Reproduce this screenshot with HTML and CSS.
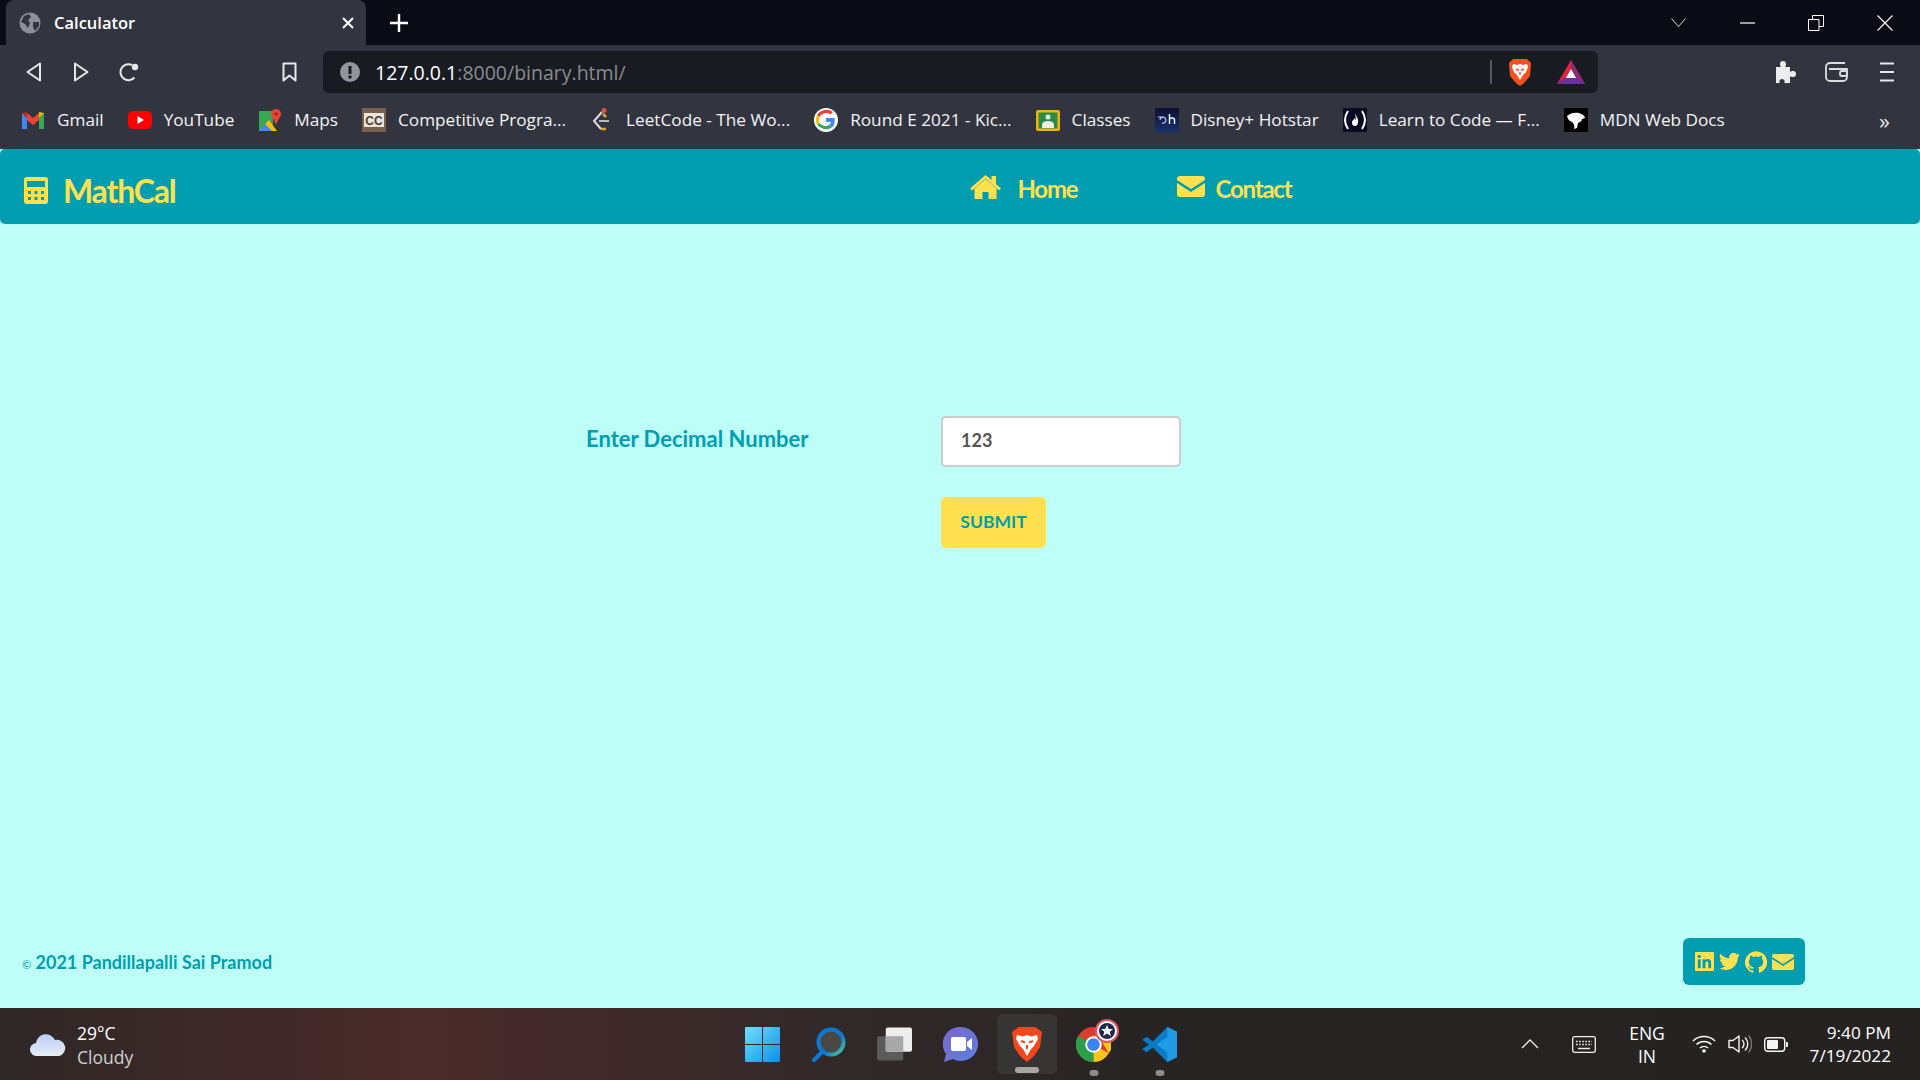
FILE: index.html
```html
<!DOCTYPE html>
<html lang="en">
<head>
    <meta charset="UTF-8">
    <title>Calculator</title>
    <link rel="stylesheet" href="styles.css">
</head>
<body>

    <!-- browser chrome -->
    <div class="tabbar">
        <div class="tab">
            <svg class="tab-globe" viewBox="0 0 22 22"><circle cx="11" cy="11" r="10.5" fill="#8d9096"/><path d="M5 4l5-2 2 3-3 3 2 3-2 5-3-4-4-2zM14 10l6 0 0 4-4 5-2-4z" fill="#32353f"/></svg>
            <span class="tab-title">Calculator</span>
            <svg class="tab-close" viewBox="0 0 14 14"><path d="M2 2l10 10M12 2L2 12" stroke="#fff" stroke-width="2"/></svg>
        </div>
        <svg class="tab-new" viewBox="0 0 18 18"><path d="M9 0v18M0 9h18" stroke="#fff" stroke-width="2.4"/></svg>
        <div class="win-controls">
            <svg class="win-chevron" viewBox="0 0 15 9"><path d="M.5.5l7 8 7-8" fill="none" stroke="#d8d8dc"/></svg>
            <svg class="win-min" viewBox="0 0 15 2"><path d="M0 1h15" stroke="#fff" stroke-width="1.2"/></svg>
            <svg class="win-restore" viewBox="0 0 16 16"><path d="M.5 4.5h10.500v11H.5zM4.500 4.500V.5h11v11H11" fill="none" stroke="#fff"/></svg>
            <svg class="win-close" viewBox="0 0 16 16"><path d="M.5.5l15 15M15.500.5l-15 15" stroke="#fff" stroke-width="1.100"/></svg>
        </div>
    </div>

    <div class="toolbar">
        <svg class="tool-back" viewBox="0 0 15 20"><path d="M14 1.500v17L1.500 10z" fill="none" stroke="#e8e8ea" stroke-width="2" stroke-linejoin="round"/></svg>
        <svg class="tool-fwd" viewBox="0 0 15 20"><path d="M1 1.500v17L13.500 10z" fill="none" stroke="#e8e8ea" stroke-width="2" stroke-linejoin="round"/></svg>
        <svg class="tool-reload" viewBox="0 0 20 20"><path d="M15.500 15.500A8 8 0 1 1 13 3" fill="none" stroke="#e8e8ea" stroke-width="2"/><circle cx="16" cy="5" r="3.200" fill="#e8e8ea"/></svg>
        <svg class="tool-mark" viewBox="0 0 15 20"><path d="M1.500 1.500h12v17l-6-5-6 5z" fill="none" stroke="#e8e8ea" stroke-width="2" stroke-linejoin="round"/></svg>
        <div class="omnibox">
            <svg class="omni-info" viewBox="0 0 20 20"><circle cx="10" cy="10" r="10" fill="#92959b"/><path d="M10 4v8" stroke="#181b22" stroke-width="3"/><circle cx="10" cy="15" r="1.700" fill="#181b22"/></svg>
            <span class="omni-url">127.0.0.1<span class="omni-rest">:8000/binary.html/</span></span>
            <span class="omni-sep"></span>
            <svg class="omni-brave" viewBox="0 0 24 28"><path d="M5 1h14l4 4-1 13-6 7-4 3-4-3-6-7L1 5z" fill="#f4511e"/><path d="M5 6l4 1 3-1 3 1 4-1 1 3-2 5-3 3-3 5-3-5-3-3-2-5z" fill="#fff"/><path d="M8 11l3 1.500M16 11l-3 1.500M12 14v3" stroke="#f4511e" stroke-width="1.500"/></svg>
            <svg class="omni-bat" viewBox="0 0 28 24"><path d="M14 0l14 24H0z" fill="#e0243f"/><path d="M14 0l14 24H14z" fill="#8a2a70"/><path d="M7 18h14l7 6H0z" fill="#6c2fa0"/><path d="M14 9l5 9H9z" fill="#fff"/></svg>
        </div>
        <svg class="tool-puzzle" viewBox="0 0 22 22"><path d="M1 6h5c-1-1-1-2-1-3a3 3 0 0 1 6 0c0 1 0 2-1 3h5v5c1-1 2-1 3-1a3 3 0 0 1 0 6c-1 0-2 0-3-1v7H9c1-1 1-2 0-3a2.500 2.500 0 0 0-4 0c-1 1-1 2 0 3H1z" fill="#ececed"/></svg>
        <svg class="tool-wallet" viewBox="0 0 23 20"><path d="M20 1H5a4 4 0 0 0-4 4v10a4 4 0 0 0 4 4h13a4 4 0 0 0 4-4V7H4" fill="none" stroke="#dcdde0" stroke-width="1.800"/><rect x="15" y="9" width="7" height="5" rx="2" fill="none" stroke="#dcdde0" stroke-width="1.800"/></svg>
        <svg class="tool-menu" viewBox="0 0 14 20"><path d="M0 1.500h14M0 10h14M0 18.500h14" stroke="#e8e8ea" stroke-width="2.200"/></svg>
    </div>

    <div class="bookmarks">
        <a class="bookmark">
            <svg class="bm-icon" viewBox="0 0 24 24"><path d="M1 5v16h5V10z" fill="#4285f4"/><path d="M23 5v16h-5V10z" fill="#34a853"/><path d="M6 5v7l6 5 6-5V5l-6 5z" fill="#ea4335"/><path d="M1 5l5 5V4z" fill="#c5221f"/><path d="M23 5l-5 5V4z" fill="#fbbc04"/></svg>
            Gmail
        </a>
        <a class="bookmark">
            <svg class="bm-icon" viewBox="0 0 24 24"><rect y="3" width="24" height="18" rx="5" fill="#f00"/><path d="M9.500 8l6.500 4-6.500 4z" fill="#fff"/></svg>
            YouTube
        </a>
        <a class="bookmark">
            <svg class="bm-icon" viewBox="0 0 24 24"><path d="M1 3h14v20H1z" fill="#35a853"/><path d="M1 23l10-11 8 11z" fill="#fbbc04"/><path d="M1 23l6-7 7 7z" fill="#4285f4"/><circle cx="18" cy="6" r="5" fill="#ea4335"/><path d="M14 8l4 9 4-9z" fill="#ea4335"/><circle cx="18" cy="6" r="1.800" fill="#a52714"/></svg>
            Maps
        </a>
        <a class="bookmark">
            <svg class="bm-icon" viewBox="0 0 24 24"><rect width="24" height="24" fill="#77604c"/><rect x="2" y="5" width="20" height="14" fill="#e9e4dc"/><text x="12" y="16.500" class="bm-cc">CC</text></svg>
            Competitive Progra...
        </a>
        <a class="bookmark">
            <svg class="bm-icon" viewBox="0 0 24 24"><path d="M12 4L4 13l7 8" fill="none" stroke="#ddd" stroke-width="2"/><path d="M11 21h5" stroke="#f0a22e" stroke-width="2.500"/><path d="M9 13h10" stroke="#bbb" stroke-width="2"/><path d="M13 6l3 3" stroke="#f0a22e" stroke-width="2.500"/><circle cx="14" cy="2.500" r="2.500" fill="#d9534f"/></svg>
            LeetCode - The Wo...
        </a>
        <a class="bookmark">
            <svg class="bm-icon" viewBox="0 0 24 24"><circle cx="12" cy="12" r="12" fill="#fff"/><path d="M12 10v4h5a5 5 0 0 1-2 3l3 2.500c2-2 3-4.500 2.600-9.500z" fill="#4285f4"/><path d="M5.500 15a7.500 7.500 0 0 0 9.500 2l3 2.500A11 11 0 0 1 3 16.500z" fill="#34a853"/><path d="M5.500 15a7.500 7.500 0 0 1 0-6L3 7a11 11 0 0 0 0 9.500z" fill="#fbbc05"/><path d="M5.500 9A7.500 7.500 0 0 1 16.500 6.500L19 4A11 11 0 0 0 3 7z" fill="#ea4335"/></svg>
            Round E 2021 - Kic...
        </a>
        <a class="bookmark">
            <svg class="bm-icon" viewBox="0 0 24 24"><rect y="2" width="24" height="21" rx="2" fill="#f4b400"/><rect x="2.500" y="4.500" width="19" height="16" fill="#2e8b47"/><circle cx="12" cy="9" r="2.500" fill="#e8f0e8"/><path d="M6 17c0-3 3-4 6-4s6 1 6 4v3H6z" fill="#e8f0e8"/></svg>
            Classes
        </a>
        <a class="bookmark">
            <svg class="bm-icon" viewBox="0 0 24 24"><defs><linearGradient id="dh" x1="0" y1="0" x2="0" y2="1"><stop offset="0" stop-color="#0a1030"/><stop offset="1" stop-color="#1a3070"/></linearGradient></defs><rect width="24" height="24" fill="url(#dh)"/><path d="M3 9h6M5 12a3 3 0 1 1 2 3" fill="none" stroke="#c8d0e8" stroke-width="1.200"/><path d="M14.500 6v10M14.500 11c1-1.500 5-1.500 5 1v4" fill="none" stroke="#e8ecf5" stroke-width="1.500"/></svg>
            Disney+ Hotstar
        </a>
        <a class="bookmark">
            <svg class="bm-icon" viewBox="0 0 24 24"><rect width="24" height="24" fill="#0a0a23"/><path d="M5 3C1 9 1 15 5 21M19 3c4 6 4 12 0 18" fill="none" stroke="#fff" stroke-width="2"/><path d="M12 5c1 4 4 5 3 10-.5 2-1.500 3-3 3s-3-1-3-3c0-3 2-3 2.500-5 .5 1 .5 2 1 2 .5-2 0-4-.5-7z" fill="#fff"/></svg>
            Learn to Code — F...
        </a>
        <a class="bookmark">
            <svg class="bm-icon" viewBox="0 0 24 24"><rect width="24" height="24" fill="#000"/><path d="M3 8c3-3 8-4 12-3 3 1 6 3 6 5l-3 1c0 3-3 3-4 4l-1 5-3 1c1-3 0-5-2-7-2-1-4-2-5-6z" fill="#fff"/></svg>
            MDN Web Docs
        </a>
        <span class="bm-more">»</span>
    </div>

    <!-- page -->
    <div class="page">
        <nav class="navbar">
            <a class="brand">
                <svg class="brand-icon" viewBox="0 0 24 27"><path d="M3 0h18a3 3 0 0 1 3 3v21a3 3 0 0 1-3 3H3a3 3 0 0 1-3-3V3a3 3 0 0 1 3-3zm0 4v6h18V4zm1 10v3h3v-3zm6.500 0v3h3v-3zM17 14v3h3v-3zM4 20v3h3v-3zm6.500 0v3h3v-3zM17 20v3h3v-3z" fill="#ffe14f" fill-rule="evenodd"/></svg>
                MathCal
            </a>
            <ul class="nav-links">
                <li class="nav-home">
                    <svg class="home-icon" viewBox="0 0 31 24"><path d="M15.500 4L4.500 13.500V24h8v-7h6v7h8V13.500z" fill="#ffe14f"/><path d="M0 13.500L15.500 0l6 5V1h4.500v8l5 4.500-2 2L15.500 3.500 2 15.500z" fill="#ffe14f"/></svg>
                    Home
                </li>
                <li class="nav-contact">
                    <svg class="mail-icon" viewBox="0 0 28 21"><path d="M3 0h22a3 3 0 0 1 3 3v1L14 13 0 4V3a3 3 0 0 1 3-3z" fill="#ffe14f"/><path d="M0 7l14 9 14-9v11a3 3 0 0 1-3 3H3a3 3 0 0 1-3-3z" fill="#ffe14f"/></svg>
                    Contact
                </li>
            </ul>
        </nav>

        <form class="decimal-form">
            <label class="form-label" for="decimal">Enter Decimal Number</label>
            <input class="form-input" id="decimal" type="text" value="123">
            <button class="form-submit" type="button">SUBMIT</button>
        </form>

        <footer class="footer">
            <p class="copyright"><span class="copy-sign">©</span> 2021 Pandillapalli Sai Pramod</p>
            <div class="social">
                <svg class="social-linkedin" viewBox="0 0 20 20"><path d="M1 0h18a1 1 0 0 1 1 1v18a1 1 0 0 1-1 1H1a1 1 0 0 1-1-1V1a1 1 0 0 1 1-1zm2 7.500V17h3V7.500zM4.500 3a1.700 1.700 0 1 0 0 3.400 1.700 1.700 0 0 0 0-3.400zM8 7.500V17h3v-5c0-2.500 3-2.500 3 0v5h3v-6c0-4-4.500-4.500-6-2V7.500z" fill="#ffe14f" fill-rule="evenodd"/></svg>
                <svg class="social-twitter" viewBox="0 0 24 24"><path d="M24 4.600a10 10 0 0 1-2.800.8 5 5 0 0 0 2.200-2.700 10 10 0 0 1-3.100 1.200 4.900 4.900 0 0 0-8.400 4.500A14 14 0 0 1 1.700 3.200a4.900 4.900 0 0 0 1.500 6.600 5 5 0 0 1-2.200-.6 4.900 4.900 0 0 0 3.900 4.800 5 5 0 0 1-2.200.1 4.900 4.900 0 0 0 4.600 3.400A10 10 0 0 1 0 19.500a14 14 0 0 0 7.500 2.200c9.100 0 14.300-7.700 14-14.600A10 10 0 0 0 24 4.600z" fill="#ffe14f"/></svg>
                <svg class="social-github" viewBox="0 0 24 24"><path d="M12 .3a12 12 0 0 0-3.800 23.400c.6.100.8-.3.800-.6v-2c-3.300.7-4-1.600-4-1.600-.6-1.400-1.400-1.800-1.400-1.800-1-.7.100-.7.100-.7 1.200.1 1.800 1.200 1.800 1.200 1 1.800 2.800 1.300 3.500 1 .1-.8.400-1.300.8-1.600-2.700-.3-5.500-1.300-5.500-6 0-1.200.5-2.300 1.300-3.100-.2-.4-.6-1.600 0-3.200 0 0 1-.3 3.400 1.200a11.500 11.500 0 0 1 6 0c2.300-1.500 3.300-1.200 3.300-1.200.7 1.600.3 2.800.1 3.200.8.800 1.300 1.900 1.300 3.100 0 4.600-2.800 5.600-5.500 5.900.5.400.9 1.100.9 2.300v3.300c0 .3.200.7.800.6A12 12 0 0 0 12 .3z" fill="#ffe14f"/></svg>
                <svg class="social-mail" viewBox="0 0 22 16"><path d="M2 0h18a2 2 0 0 1 2 2v1l-11 7L0 3V2a2 2 0 0 1 2-2z" fill="#ffe14f"/><path d="M0 5l11 7 11-7v9a2 2 0 0 1-2 2H2a2 2 0 0 1-2-2z" fill="#ffe14f"/></svg>
            </div>
        </footer>
    </div>

    <!-- windows taskbar -->
    <div class="taskbar">
        <div class="weather">
            <svg class="weather-icon" viewBox="0 0 36 23"><defs><linearGradient id="cloud" x1="0" y1="0" x2="0" y2="1"><stop offset="0" stop-color="#b9cdf5"/><stop offset="1" stop-color="#e8edf5"/></linearGradient></defs><path d="M7 23a6.500 6.500 0 0 1-1-13 10 10 0 0 1 19-3 8 8 0 0 1 4 16z" fill="url(#cloud)"/></svg>
            <div class="weather-text">
                <div class="weather-temp">29°C</div>
                <div class="weather-desc">Cloudy</div>
            </div>
        </div>

        <div class="task-icons">
            <svg class="task-icon" viewBox="0 0 35 35"><defs><linearGradient id="win" x1="0" y1="0" x2="1" y2="1"><stop offset="0" stop-color="#6fe0fb"/><stop offset="1" stop-color="#0c8fe6"/></linearGradient></defs><path d="M1 0h16v17H0V1a1 1 0 0 1 1-1zM18 0h16a1 1 0 0 1 1 1v16H18zM0 18h17v17H1a1 1 0 0 1-1-1zM18 18h17v16a1 1 0 0 1-1 1H18z" fill="url(#win)"/></svg>
            <svg class="task-icon" viewBox="0 0 35 35"><defs><linearGradient id="srch" x1="0" y1="0" x2="1" y2="1"><stop offset="0" stop-color="#0a78d4"/><stop offset=".6" stop-color="#0a78d4"/><stop offset="1" stop-color="#4fd08a"/></linearGradient></defs><circle cx="20" cy="15" r="12.500" fill="#4a4644" stroke="url(#srch)" stroke-width="4"/><path d="M11 25l-8 8" stroke="#0a78d4" stroke-width="4" stroke-linecap="round"/></svg>
            <svg class="task-icon" viewBox="0 0 36 35"><rect y="9" width="27" height="25" rx="2" fill="#5b5b5b"/><rect x="9" width="27" height="25" rx="2" fill="#ededed"/><rect x="9" y="9" width="18" height="16" fill="#a8a8a8"/></svg>
            <svg class="task-icon" viewBox="0 0 35 35"><defs><linearGradient id="chat" x1="0" y1="0" x2="1" y2="1"><stop offset="0" stop-color="#7b68c8"/><stop offset="1" stop-color="#5b7fe0"/></linearGradient></defs><path d="M18 0a17 17 0 1 1-8 32l-9 3 2-8A17 17 0 0 1 18 0z" fill="url(#chat)"/><rect x="8" y="10" width="15" height="14" rx="2" fill="#fff"/><path d="M24 15l5-4v12l-5-4z" fill="#fff"/></svg>
            <div class="task-active">
                <svg class="task-brave" viewBox="0 0 30 35"><path d="M7 0h16l3 2 4 3-2 15-6 9-7 6-7-6-6-9L0 5l4-3z" fill="#f5461d"/><path d="M5 8l6 1.500L15 8l4 1.500L25 8l1 4-4 7-3 3-4 7-4-7-3-3-4-7z" fill="#fff"/><path d="M9 14l4 1.500M21 14l-4 1.500M15 18v4" stroke="#f5461d" stroke-width="2"/></svg>
                <span class="task-bar-wide"></span>
            </div>
            <div class="task-chrome">
                <svg class="task-icon" viewBox="0 0 36 36"><circle cx="18" cy="18" r="18" fill="#dd3b2f"/><path d="M18 18L33.600 27A18 18 0 0 1 18 36z" fill="#f8c61b"/><path d="M18 18L18 36A18 18 0 0 1 2.400 9z" fill="#2d9e4a"/><path d="M18 9H36a18 18 0 0 1-2.400 18L26 14z" fill="#f8c61b"/><circle cx="18" cy="18" r="8.500" fill="#fff"/><circle cx="18" cy="18" r="6.500" fill="#3a84f0"/></svg>
                <svg class="chrome-badge" viewBox="0 0 24 24"><circle cx="12" cy="12" r="12" fill="#d85a62"/><circle cx="12" cy="12" r="10" fill="#fff"/><circle cx="12" cy="12" r="8" fill="#1d2a4d"/><path d="M12 6l1.800 4h4.200l-3.300 2.800 1.200 4.200-3.900-2.400L8.100 17l1.200-4.200L6 10h4.200z" fill="#fff"/></svg>
                <span class="task-bar-small"></span>
            </div>
            <div class="task-code">
                <svg class="task-icon" viewBox="0 0 36 36"><path d="M26 0L36 5v26l-10 5L11 21l-6 5-5-3 7-5-7-5 5-3 6 5z" fill="#0a7cc7"/><path d="M26 0L36 5v26l-10 5zM26 10L15 18l11 8z" fill="#1f9ce5" fill-rule="evenodd"/></svg>
                <span class="task-bar-small"></span>
            </div>
        </div>

        <div class="tray">
            <svg class="tray-chevron" viewBox="0 0 18 10"><path d="M1 9l8-8 8 8" fill="none" stroke="#eee" stroke-width="1.300"/></svg>
            <svg class="tray-keyboard" viewBox="0 0 24 17"><rect x=".7" y=".7" width="22.600" height="15.600" rx="2" fill="none" stroke="#eee" stroke-width="1.300"/><path d="M4 5.500h16M4 8.500h16" stroke="#eee" stroke-width="1.400" stroke-dasharray="1.600 1.500"/><path d="M6 12.500h12" stroke="#eee" stroke-width="1.400"/></svg>
            <div class="tray-lang">ENG<br>IN</div>
            <svg class="tray-wifi" viewBox="0 0 24 18"><path d="M1 6a16 16 0 0 1 22 0M4.500 9.500a11 11 0 0 1 15 0M8 13a6 6 0 0 1 8 0" fill="none" stroke="#f5f5f5" stroke-width="1.500"/><circle cx="12" cy="16" r="1.800" fill="#f5f5f5"/></svg>
            <svg class="tray-volume" viewBox="0 0 24 20"><path d="M1 6.500h4L11 2v16l-6-4.500H1z" fill="none" stroke="#f5f5f5" stroke-width="1.400" stroke-linejoin="round"/><path d="M14 6a5 5 0 0 1 0 8M17 3.500a9 9 0 0 1 0 13" fill="none" stroke="#f5f5f5" stroke-width="1.400"/><path d="M20.500 1.500a13 13 0 0 1 0 17" fill="none" stroke="#777" stroke-width="1.400"/></svg>
            <svg class="tray-battery" viewBox="0 0 24 15"><rect x=".7" y=".7" width="20" height="13.600" rx="3" fill="none" stroke="#f5f5f5" stroke-width="1.400"/><rect x="3" y="3" width="11" height="9" rx="1" fill="#f5f5f5"/><path d="M22 5h1a1 1 0 0 1 1 1v3a1 1 0 0 1-1 1h-1z" fill="#f5f5f5"/></svg>
            <div class="tray-clock">9:40 PM<br>7/19/2022</div>
        </div>
    </div>

</body>
</html>
```

FILE: styles.css
```css
* {
    box-sizing: border-box;
}
html, body {
    margin: 0;
    height: 100%;
}
body {
    display: flex;
    flex-direction: column;
    height: 1080px;
    overflow: hidden;
    background-color: #bdfff6;
    font-family: "Open Sans", sans-serif;
}
svg {
    display: block;
    flex: none;
}

/* Browser tabs */
.tabbar {
    display: flex;
    align-items: center;
    height: 45px;
    padding-left: 6px;
    background-color: #0b0b15;
}
.tab {
    display: flex;
    align-items: center;
    width: 360px;
    height: 45px;
    padding: 0 11px 0 13px;
    border-radius: 8px 8px 0 0;
    background-color: #32353f;
}
.tab-globe {
    width: 22px;
    height: 22px;
}
.tab-title {
    flex: 1;
    margin-left: 13px;
    color: #fff;
    font-size: 16.500px;
    font-weight: 600;
}
.tab-close {
    width: 14px;
    height: 14px;
}
.tab-new {
    width: 18px;
    height: 18px;
    margin-left: 24px;
}
.win-controls {
    display: flex;
    align-items: center;
    margin-left: auto;
    padding-right: 27px;
}
.win-chevron {
    width: 15px;
    height: 9px;
}
.win-min {
    width: 15px;
    height: 2px;
    margin-left: 54px;
}
.win-restore {
    width: 16px;
    height: 16px;
    margin-left: 53px;
}
.win-close {
    width: 16px;
    height: 16px;
    margin-left: 53px;
}

/* Browser toolbar */
.toolbar {
    display: flex;
    align-items: center;
    height: 48px;
    padding: 6px 26px 0 26px;
    background-color: #32353f;
}
.tool-back, .tool-fwd, .tool-mark {
    width: 15px;
    height: 20px;
}
.tool-fwd {
    margin-left: 33px;
}
.tool-reload {
    width: 20px;
    height: 20px;
    margin-left: 30px;
}
.tool-mark {
    margin-left: 143px;
}
.omnibox {
    display: flex;
    align-items: center;
    width: 1275px;
    height: 42px;
    margin-left: 26px;
    padding: 0 13px 0 17px;
    border-radius: 6px;
    background-color: #181b22;
}
.omni-info {
    width: 20px;
    height: 20px;
}
.omni-url {
    flex: 1;
    margin-left: 15px;
    color: #fff;
    font-size: 19.500px;
}
.omni-rest {
    color: #8a8c90;
}
.omni-sep {
    width: 2px;
    height: 24px;
    background-color: #55585e;
}
.omni-brave {
    width: 24px;
    height: 28px;
    margin-left: 16px;
}
.omni-bat {
    width: 28px;
    height: 24px;
    margin-left: 25px;
}
.tool-puzzle {
    width: 22px;
    height: 22px;
    margin-left: 177px;
}
.tool-wallet {
    width: 23px;
    height: 20px;
    margin-left: 28px;
}
.tool-menu {
    width: 14px;
    height: 20px;
    margin-left: 32px;
}

/* Bookmarks */
.bookmarks {
    display: flex;
    align-items: center;
    gap: 24px;
    height: 56px;
    padding: 0 30px 3px 21px;
    background-color: #32353f;
}
.bookmark {
    display: flex;
    align-items: center;
    gap: 12px;
    color: #f2f3f5;
    font-size: 17.200px;
    white-space: nowrap;
}
.bm-icon {
    width: 24px;
    height: 24px;
}
.bm-cc {
    font-family: "Liberation Sans", sans-serif;
    font-size: 12px;
    font-weight: 700;
    text-anchor: middle;
    fill: #4d3d30;
}
.bm-more {
    margin-left: auto;
    color: #e6e6e8;
    font-size: 22px;
    line-height: 1;
}

/* Page */
.page {
    display: flex;
    flex-direction: column;
    flex: 1;
    background-color: #bdfff6;
}
.navbar {
    display: flex;
    align-items: center;
    height: 75px;
    padding: 8px 24px 0;
    border-radius: 5px;
    background-color: #009eb0;
    color: #ffe14f;
    font-family: Lato, sans-serif;
    font-weight: 700;
}
.brand {
    display: flex;
    align-items: center;
    gap: 15px;
    font-size: 32px;
    letter-spacing: -1.200px;
}
.brand-icon {
    width: 24px;
    height: 27px;
}
.nav-links {
    display: flex;
    align-items: center;
    margin: 0 0 4px 0;
    padding: 0;
    list-style: none;
    font-size: 24px;
    letter-spacing: -1.200px;
}
.nav-links li {
    display: flex;
    align-items: center;
}
.nav-home {
    gap: 16px;
    margin-left: 795px;
}
.nav-contact {
    gap: 10px;
    margin-left: 100px;
}
.home-icon {
    width: 31px;
    height: 24px;
    margin-bottom: 4px;
}
.mail-icon {
    width: 28px;
    height: 21px;
    margin-bottom: 4px;
}

/* Form */
.decimal-form {
    display: grid;
    grid-template-columns: 355px 240px;
    row-gap: 30px;
    align-items: center;
    margin-top: 192px;
    padding-left: 586px;
}
.form-label {
    padding-bottom: 6px;
    color: #009eb0;
    font-family: Lato, sans-serif;
    font-size: 22px;
    font-weight: 700;
}
.form-input {
    height: 51px;
    padding: 0 18px 3px;
    border: 2px solid #ccc;
    border-radius: 5px;
    background-color: #fff;
    color: #555;
    font-family: Lato, sans-serif;
    font-size: 18px;
    font-weight: 700;
}
.form-submit {
    grid-column: 2;
    width: 105px;
    height: 51px;
    padding: 0 0 3px;
    border: none;
    border-radius: 5px;
    background-color: #ffe14f;
    color: #009eb0;
    font-family: Lato, sans-serif;
    font-size: 17.500px;
    font-weight: 700;
}

/* Footer */
.footer {
    display: flex;
    align-items: center;
    justify-content: space-between;
    margin-top: auto;
    padding: 0 115px 23px 22px;
}
.copyright {
    margin: 0;
    color: #009eb0;
    font-family: Lato, sans-serif;
    font-size: 18px;
    font-weight: 700;
}
.copy-sign {
    font-size: 11px;
    font-weight: 400;
}
.social {
    display: flex;
    align-items: center;
    gap: 5px;
    width: 122px;
    height: 47px;
    padding-left: 12px;
    border-radius: 6px;
    background-color: #009eb0;
}
.social-linkedin {
    width: 19px;
    height: 19px;
}
.social-twitter {
    width: 21px;
    height: 21px;
}
.social-github {
    width: 22px;
    height: 22px;
}
.social-mail {
    width: 22px;
    height: 16px;
}

/* Taskbar */
.taskbar {
    display: grid;
    grid-template-columns: 1fr auto 1fr;
    align-items: center;
    height: 72px;
    background: linear-gradient(90deg, #2e2726 0%, #4c2b2b 22%, #33292a 42%, #272423 60%, #252322 100%);
    color: #fff;
    font-size: 18px;
}
.weather {
    display: flex;
    align-items: center;
    gap: 11px;
    padding-left: 30px;
}
.weather-icon {
    width: 36px;
    height: 23px;
}
.weather-text {
    padding-top: 2px;
}
.weather-temp {
    font-size: 17.500px;
    line-height: 24px;
}
.weather-desc {
    color: #cfcfcf;
    font-size: 17.500px;
    line-height: 24px;
}
.task-icons {
    display: flex;
    align-items: center;
    gap: 31px;
    margin-left: 2px;
}
.task-icon {
    width: 35px;
    height: 35px;
}
.task-active {
    position: relative;
    display: flex;
    align-items: center;
    justify-content: center;
    width: 60px;
    height: 60px;
    margin: 0 -12px;
    border-radius: 6px;
    background-color: #373434;
}
.task-brave {
    width: 30px;
    height: 35px;
}
.task-bar-wide, .task-bar-small {
    position: absolute;
    bottom: 1px;
    left: 50%;
    height: 6px;
    border-radius: 3px;
    background-color: #a8a6a5;
    transform: translateX(-50%);
}
.task-bar-wide {
    width: 24px;
}
.task-bar-small {
    bottom: -14px;
    width: 9px;
    background-color: #8e8c8b;
}
.task-chrome, .task-code {
    position: relative;
}
.chrome-badge {
    position: absolute;
    top: -8px;
    right: -8px;
    width: 24px;
    height: 24px;
}
.tray {
    display: flex;
    align-items: center;
    justify-content: flex-end;
    padding-right: 29px;
}
.tray-chevron {
    width: 18px;
    height: 10px;
}
.tray-keyboard {
    width: 24px;
    height: 17px;
    margin-left: 33px;
}
.tray-lang {
    width: 36px;
    margin-left: 33px;
    padding-top: 2px;
    font-size: 17.500px;
    line-height: 23px;
    text-align: center;
}
.tray-wifi {
    width: 24px;
    height: 18px;
    margin-left: 27px;
}
.tray-volume {
    width: 24px;
    height: 20px;
    margin-left: 12px;
}
.tray-battery {
    width: 24px;
    height: 15px;
    margin-left: 12px;
}
.tray-clock {
    width: 103px;
    font-size: 17.200px;
    line-height: 23px;
    text-align: right;
}
```
